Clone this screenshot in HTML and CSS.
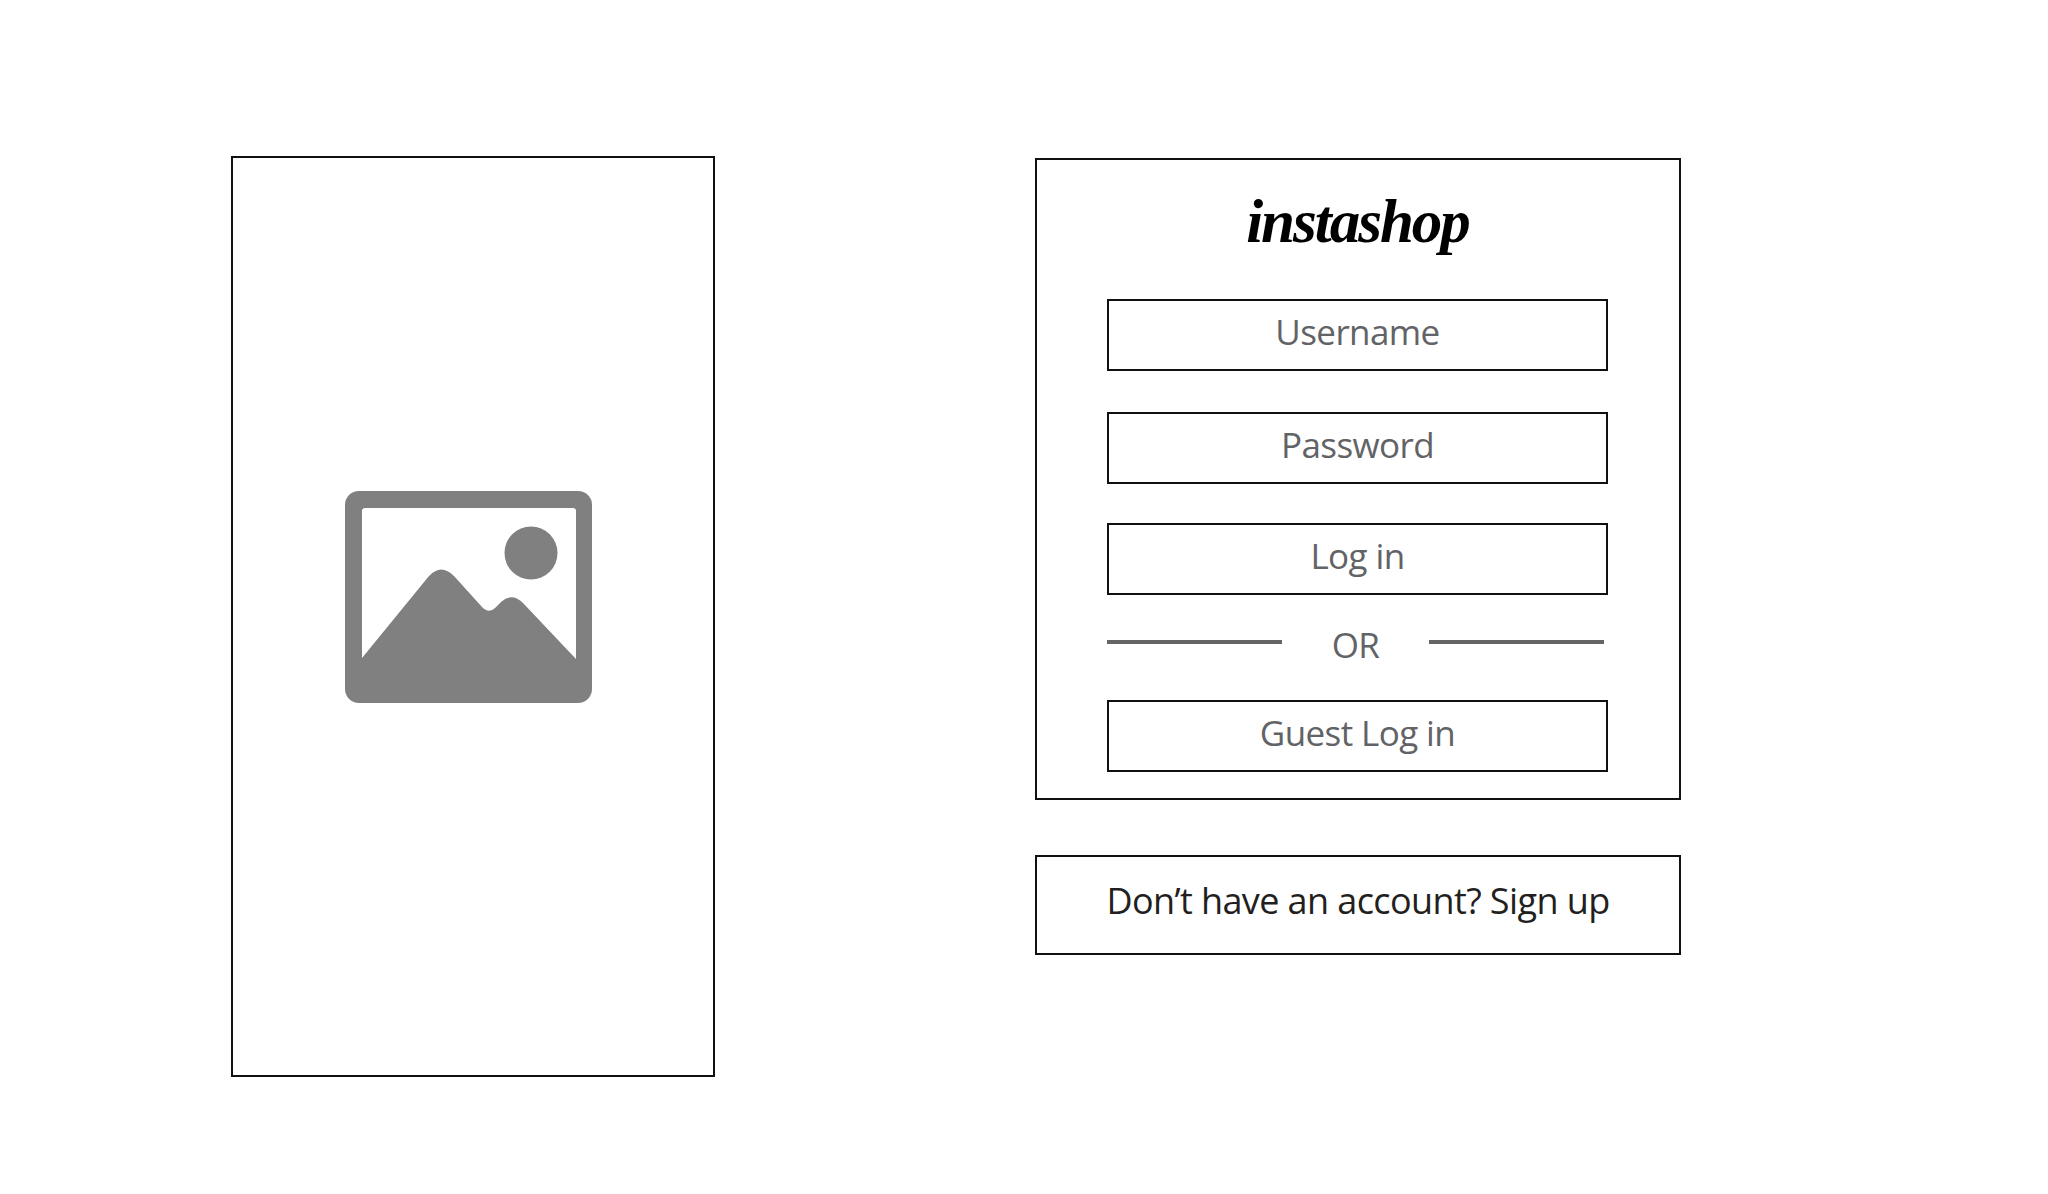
FILE: index.html
```html
<!DOCTYPE html>
<html lang="en">
<head>
  <meta charset="UTF-8" />
  <title>instashop login wireframe</title>
  <link rel="stylesheet" href="styles.css">
</head>
<body>
  <div class="page">
    <div class="photo">
      <svg class="photo-icon" viewBox="0 0 247 212" aria-hidden="true">
        <rect width="247" height="212" rx="14" fill="#808080"/>
        <path d="M17 167V20Q17 17 20 17H228Q231 17 231 20V168L178 112Q167 101 156 111L150 117Q144 123 137 116L109 85Q96 72 84 85Z" fill="#fff"/>
        <circle cx="186" cy="62" r="26.5" fill="#808080"/>
      </svg>
    </div>

    <div class="side">
      <div class="card">
        <div class="logo">instashop</div>
        <div class="field">Username</div>
        <div class="field field-password">Password</div>
        <div class="field field-login">Log in</div>
        <div class="divider">
          <span class="line"></span>
          <span class="or">OR</span>
          <span class="line"></span>
        </div>
        <div class="field">Guest Log in</div>
      </div>
      <div class="signup">Don’t have an account? Sign up</div>
    </div>
  </div>
</body>
</html>
```

FILE: styles.css
```css
body {
  margin: 0;
  background: #fff;
  font-family: "Open Sans", sans-serif;
}
.page {
  display: flex;
  align-items: flex-start;
  padding: 156px 0 0 231px;
}
.photo {
  width: 484px;
  height: 921px;
  box-sizing: border-box;
  border: 2px solid #111;
  display: flex;
  justify-content: center;
  padding: 333px 9px 0 0;
}
.photo-icon {
  width: 247px;
  height: 212px;
}
.side {
  width: 646px;
  margin: 2px 0 0 320px;
}
.card {
  height: 642px;
  box-sizing: border-box;
  border: 2px solid #111;
  padding: 0 71px 0 70px;
}
.logo {
  height: 139px;
  padding-top: 22px;
  box-sizing: border-box;
  text-align: center;
  font-family: "Liberation Serif", serif;
  font-style: italic;
  font-weight: bold;
  font-size: 61px;
  line-height: 80px;
  letter-spacing: -2px;
  color: #000;
}
.field {
  height: 72px;
  box-sizing: border-box;
  border: 2px solid #111;
  padding-bottom: 7px;
  display: flex;
  align-items: center;
  justify-content: center;
  font-size: 35px;
  letter-spacing: -0.6px;
  color: #626366;
}
.field-password {
  margin-top: 41px;
}
.field-login {
  margin-top: 39px;
}
.divider {
  height: 105px;
  display: flex;
  justify-content: space-between;
  padding-right: 4px;
}
.line {
  width: 175px;
  height: 4px;
  margin-top: 45px;
  background: #646567;
}
.or {
  line-height: 100px;
  font-size: 35px;
  letter-spacing: -0.6px;
  color: #626366;
}
.signup {
  height: 100px;
  margin-top: 55px;
  box-sizing: border-box;
  border: 2px solid #111;
  padding-bottom: 10px;
  display: flex;
  align-items: center;
  justify-content: center;
  font-size: 36px;
  letter-spacing: -0.6px;
  color: #231f20;
}
```
